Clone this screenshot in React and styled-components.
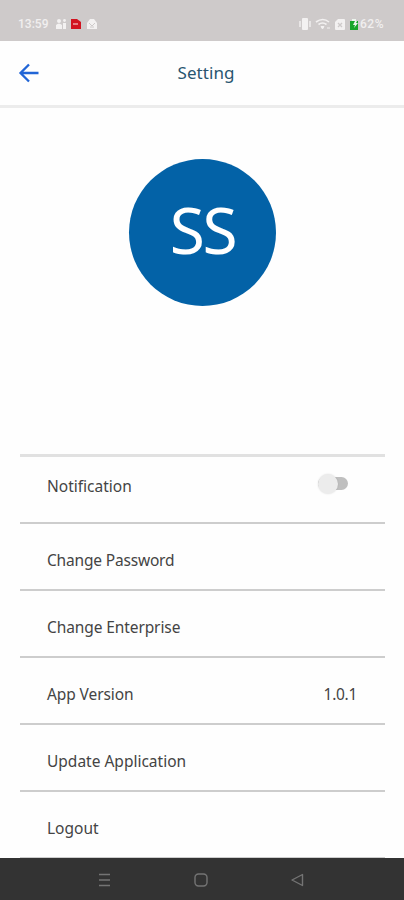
import React from "react";
import styled, { createGlobalStyle } from "styled-components";

const GlobalStyle = createGlobalStyle`
  * { box-sizing: border-box; }
  html, body { margin: 0; background: #fefefe; }
  body { font-family: "Noto Sans", "Open Sans", sans-serif; overflow: hidden; }
`;

const Screen = styled.div`
  width: 404px;
  height: 900px;
  display: flex;
  flex-direction: column;
  overflow: hidden;
  background: #fefefe;
`;

const StatusBar = styled.div`
  flex: none;
  height: 41px;
  padding: 7px 20px 0 18px;
  display: flex;
  align-items: center;
  justify-content: space-between;
  background: #cecaca;
  color: #f3f1f1;
`;

const StatusGroup = styled.div`
  display: flex;
  align-items: center;
  height: 16px;
`;

const StatusText = styled.span`
  font-family: Roboto, sans-serif;
  font-size: 12px;
  font-weight: 500;
  line-height: 16px;
  letter-spacing: ${(p) => p.$spacing || "0"};
  color: #f1efef;
`;

const Glyph = styled.svg`
  display: block;
  flex: none;
  margin-left: ${(p) => p.$gap || 0}px;
`;

const Header = styled.header`
  flex: none;
  height: 67px;
  padding: 0 18px;
  display: grid;
  grid-template-columns: 22px 1fr 14px;
  align-items: center;
  border-bottom: 3px solid #ececec;
`;

const BackButton = styled.button`
  border: 0;
  padding: 0;
  background: none;
  display: flex;
`;

const Title = styled.h1`
  margin: 0;
  text-align: center;
  font-size: 17px;
  font-weight: 400;
  line-height: 24px;
  letter-spacing: 0.05px;
  color: #285570;
`;

const Profile = styled.section`
  flex: none;
  height: 346px;
  padding: 51px 0 0 1px;
  display: flex;
  justify-content: center;
`;

const Avatar = styled.div`
  width: 147px;
  height: 147px;
  padding-bottom: 5px;
  border-radius: 50%;
  background: #0362a7;
  color: #fff;
  display: flex;
  align-items: center;
  justify-content: center;
  font-size: 64px;
  line-height: 1;
  letter-spacing: -2.5px;
`;

const List = styled.div`
  flex: none;
  height: 404px;
  margin: 0 19px 0 20px;
  border-top: 3px solid #e1e1e1;
  overflow: hidden;
`;

const Row = styled.div`
  height: 67px;
  padding: ${(p) => (p.$first ? "0 28px 7px 27px" : "6px 28px 0 27px")};
  display: flex;
  align-items: center;
  justify-content: space-between;
  border-bottom: 2px solid #cdcdcd;
`;

const Label = styled.span`
  font-size: 15.5px;
  line-height: 22px;
  letter-spacing: ${(p) => (p.$spacing ? `${p.$spacing}px` : "normal")};
  color: #444;
`;

const Switch = styled.span`
  width: 30px;
  height: 13px;
  margin: 0 9px 5px 0;
  border-radius: 7px;
  background: #bfbfbf;
  display: flex;
  align-items: center;
`;

const Thumb = styled.span`
  width: 20px;
  height: 20px;
  flex: none;
  border-radius: 50%;
  background: #ececec;
  box-shadow: 0 0 2px rgba(0, 0, 0, 0.12);
`;

const NavBar = styled.nav`
  flex: none;
  height: 42px;
  background: #333;
  display: flex;
  align-items: center;
  padding: 2px 0 0 97px;
  gap: 81px;
  color: #747474;
`;

const rows = [
  { label: "Change Password", spacing: -0.18 },
  { label: "Change Enterprise", spacing: -0.1 },
  { label: "App Version", spacing: -0.1, value: "1.0.1" },
  { label: "Update Application" },
  { label: "Logout" },
];

function StatusIcons() {
  return (
    <StatusBar>
      <StatusGroup>
        <StatusText>13:59</StatusText>
        <Glyph $gap={7} width="12" height="12" viewBox="0 0 12 12" fill="currentColor">
          <circle cx="4" cy="3" r="2" />
          <path d="M1 11V7q3-3 6 0v4zM8 5h3v6H8z" />
          <circle cx="9.5" cy="2.5" r="1.4" />
        </Glyph>
        <Glyph $gap={4} width="10" height="12" viewBox="0 0 10 12">
          <path d="M0 1h6l4 3v7H0z" fill="#d21320" />
          <path d="M2 6h5" stroke="#f5b9bb" strokeWidth="1.3" />
        </Glyph>
        <Glyph $gap={5} width="12" height="12" viewBox="0 0 12 12" fill="currentColor">
          <path d="M1 5l3-4h4l3 4v6H1z" />
          <path d="M3 5l3 3 3-3M4 9h4" fill="none" stroke="#cecaca" />
        </Glyph>
      </StatusGroup>
      <StatusGroup>
        <Glyph width="12" height="14" viewBox="0 0 12 14" fill="currentColor">
          <rect x="3" y="1" width="6" height="12" rx="1" />
          <path d="M1 4v6M11 4v6" stroke="currentColor" strokeWidth="1.4" />
        </Glyph>
        <Glyph $gap={4} width="16" height="12" viewBox="0 0 16 12" fill="none" stroke="currentColor" strokeWidth="1.6">
          <path d="M1 4q7-5 13 0M3.5 6.5q4-3 8 0" />
          <path d="M6 8.5h3L7.5 11zM12 10h3" fill="currentColor" strokeWidth="1" />
        </Glyph>
        <Glyph $gap={4} width="10" height="13" viewBox="0 0 10 13">
          <path d="M3 1h6q1 0 1 1v9q0 1-1 1H1q-1 0-1-1V4z" fill="currentColor" />
          <path d="M3 5l4 4M7 5L3 9" stroke="#cecaca" strokeWidth="1.3" />
        </Glyph>
        <Glyph $gap={5} width="10" height="12" viewBox="0 0 10 12">
          <path d="M0 3h8v9H0z" fill="#19a52b" />
          <path d="M2 1h4v2H2zM5 3L3 7h2L4 10l4-5H6l1-2z" fill="#edf5ed" />
        </Glyph>
        <StatusText $spacing="0.5px">62%</StatusText>
      </StatusGroup>
    </StatusBar>
  );
}

export default function App() {
  return (
    <>
      <GlobalStyle />
      <Screen>
        <StatusIcons />
        <Header>
          <BackButton aria-label="Back">
            <Glyph width="22" height="22" viewBox="0 0 22 22" fill="none" stroke="#2165d6" strokeWidth="2.3">
              <path d="M20.5 11H3M11 2.5L2.5 11l8.5 8.5" />
            </Glyph>
          </BackButton>
          <Title>Setting</Title>
        </Header>
        <Profile>
          <Avatar>SS</Avatar>
        </Profile>
        <List>
          <Row $first>
            <Label>Notification</Label>
            <Switch role="switch" aria-checked="false" aria-label="Notification">
              <Thumb />
            </Switch>
          </Row>
          {rows.map((row) => (
            <Row key={row.label}>
              <Label $spacing={row.spacing}>{row.label}</Label>
              {row.value && <Label $spacing={-0.3}>{row.value}</Label>}
            </Row>
          ))}
        </List>
        <NavBar>
          <Glyph width="15" height="16" viewBox="0 0 15 16" fill="none" stroke="currentColor" strokeWidth="1.4">
            <path d="M2 2.5h11M2 8h11M2 13.5h11" />
          </Glyph>
          <Glyph width="16" height="16" viewBox="0 0 16 16" fill="none" stroke="currentColor" strokeWidth="1.4">
            <rect x="2" y="2" width="12" height="12" rx="3.5" />
          </Glyph>
          <Glyph width="15" height="16" viewBox="0 0 15 16" fill="none" stroke="currentColor" strokeWidth="1.4" strokeLinejoin="round">
            <path d="M12.5 2.5v11L2 8z" />
          </Glyph>
        </NavBar>
      </Screen>
    </>
  );
}
